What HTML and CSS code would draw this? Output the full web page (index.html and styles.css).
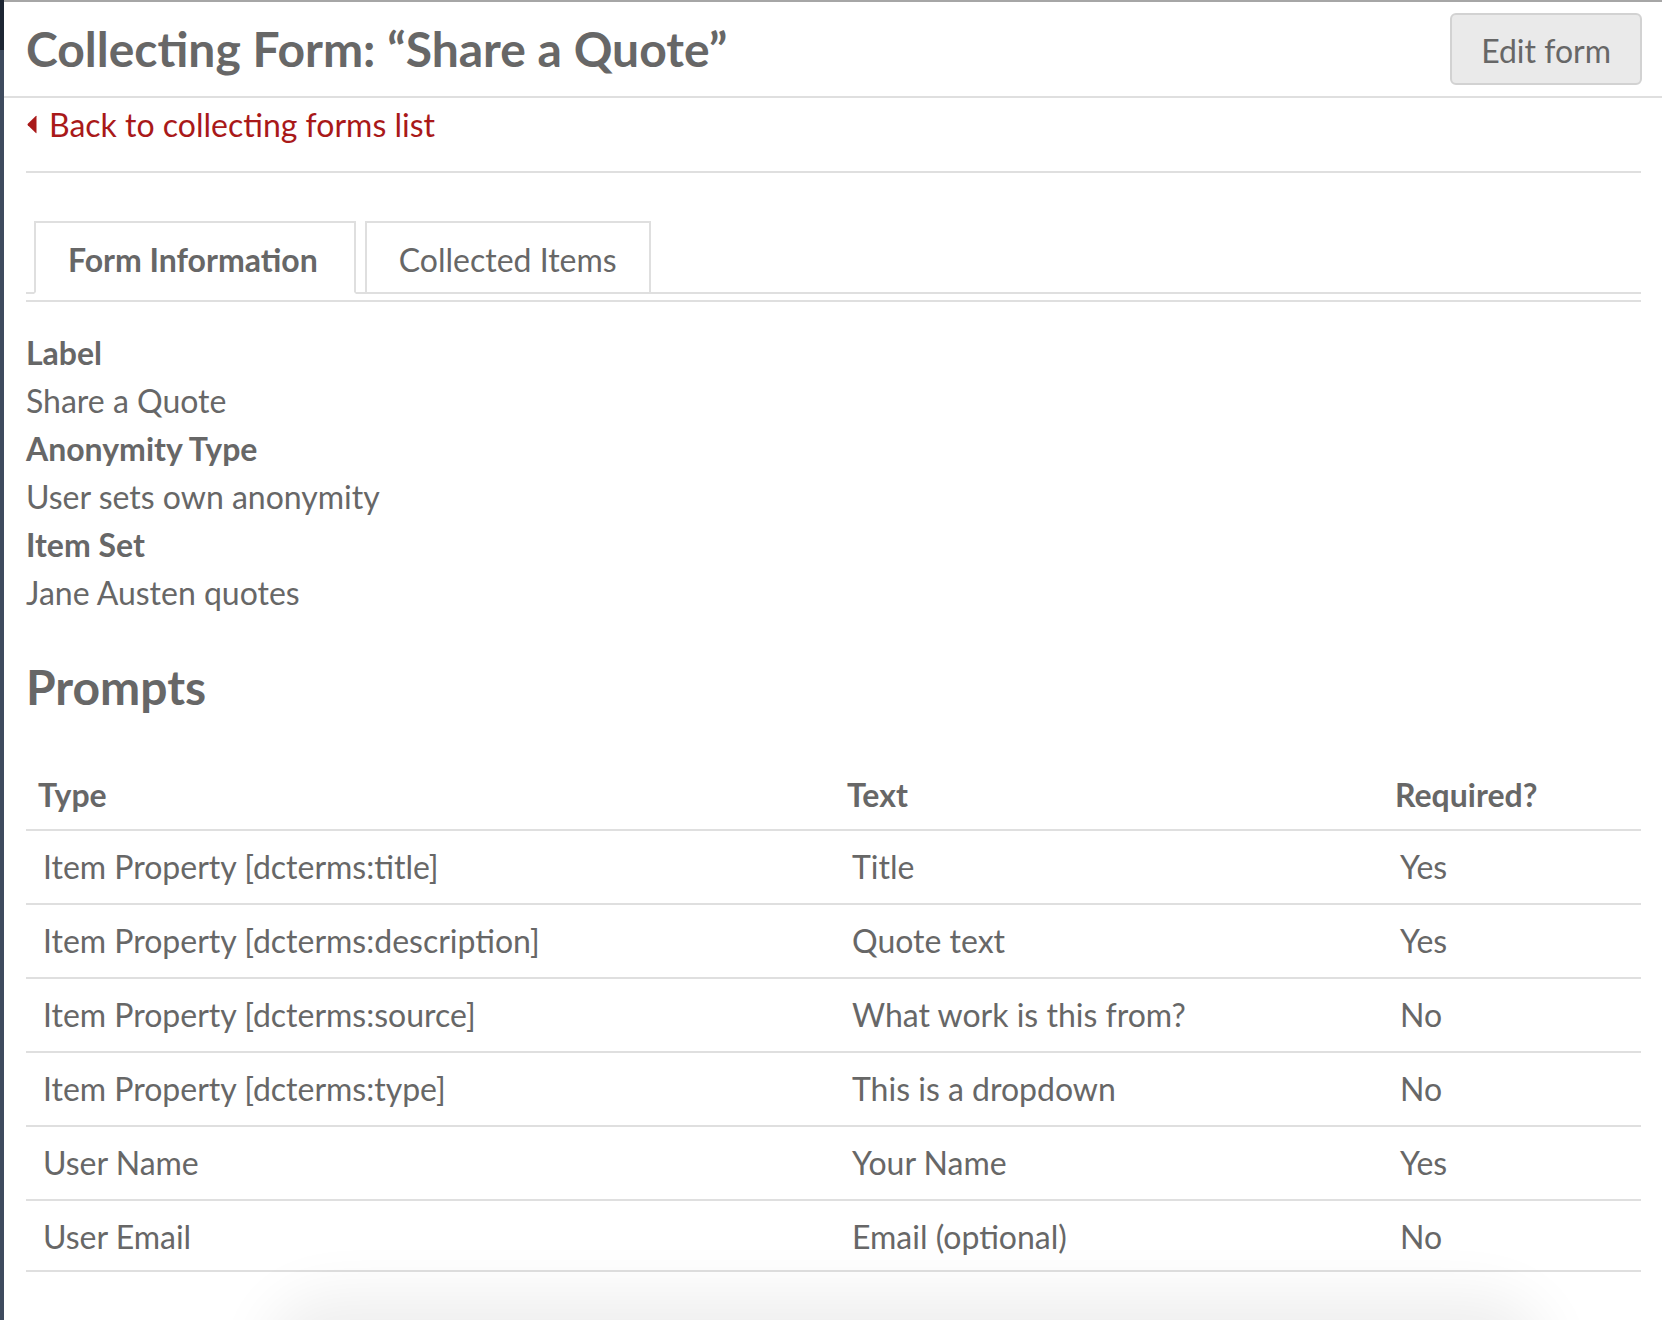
FILE: index.html
```html
<!DOCTYPE html>
<html lang="en">
<head>
<meta charset="utf-8">
<title>Collecting Form: “Share a Quote”</title>
<link rel="stylesheet" href="styles.css">
</head>
<body>
<div class="app">
  <div class="rail"></div>
  <main class="main">
    <header class="page-header">
      <h1 class="page-title">Collecting Form: “Share a Quote”</h1>
      <a class="button" href="#">Edit form</a>
    </header>
    <div class="content">
      <nav class="breadcrumb">
        <a class="back-link" href="#"><svg class="caret" width="10" height="19" viewBox="0 0 10 19"><path d="M9.5 1.2 L9.5 17.8 Q9.5 18.6 8.8 18 L0.8 10.2 Q0.1 9.5 0.8 8.8 L8.8 1 Q9.5 0.4 9.5 1.2 Z" fill="#a91919"/></svg>Back to collecting forms list</a>
      </nav>
      <ul class="tabs">
        <li class="tab active">Form Information</li>
        <li class="tab">Collected Items</li>
      </ul>
      <section class="panel">
        <dl class="props">
          <dt>Label</dt>
          <dd>Share a Quote</dd>
          <dt>Anonymity Type</dt>
          <dd>User sets own anonymity</dd>
          <dt>Item Set</dt>
          <dd>Jane Austen quotes</dd>
        </dl>
        <h2 class="section-title">Prompts</h2>
        <table class="prompts">
          <thead>
            <tr><th class="col-type">Type</th><th class="col-text">Text</th><th class="col-req">Required?</th></tr>
          </thead>
          <tbody>
            <tr><td>Item Property [dcterms:title]</td><td>Title</td><td>Yes</td></tr>
            <tr><td>Item Property [dcterms:description]</td><td>Quote text</td><td>Yes</td></tr>
            <tr><td>Item Property [dcterms:source]</td><td>What work is this from?</td><td>No</td></tr>
            <tr><td>Item Property [dcterms:type]</td><td>This is a dropdown</td><td>No</td></tr>
            <tr><td>User Name</td><td>Your Name</td><td>Yes</td></tr>
            <tr><td>User Email</td><td>Email (optional)</td><td>No</td></tr>
          </tbody>
        </table>
      </section>
    </div>
  </main>
  <div class="footer-shadow"></div>
</div>
</body>
</html>
```
FILE: styles.css
```css
html, body {
  margin: 0;
  padding: 0;
  background: #ffffff;
}
body {
  font-family: "Lato", "Liberation Sans", sans-serif;
  font-size: 32px;
  line-height: 48px;
  color: #676767;
  overflow: hidden;
}
.app {
  display: flex;
  min-height: 1320px;
}
.rail {
  width: 4px;
  flex: none;
  background: linear-gradient(to bottom, #1d2633 0, #1d2633 50px, #3e4b5e 50px, #3e4b5e 100%);
}
.main {
  flex: 1;
  border-top: 2px solid #a6a6a6;
}
.page-header {
  height: 94px;
  display: flex;
  align-items: center;
  justify-content: space-between;
  padding: 0 20px 0 22px;
  border-bottom: 2px solid #dfdfdf;
}
.page-title {
  margin: 0;
  font-size: 48px;
  line-height: 72px;
  font-weight: 700;
  color: #676767;
}
.button {
  display: inline-block;
  box-sizing: border-box;
  height: 72px;
  padding: 12px 29px 8px;
  border: 2px solid #d2d2d2;
  border-radius: 6px;
  background: #eaeaea;
  color: #676767;
  text-decoration: none;
  font-size: 32px;
  line-height: 48px;
}
.content {
  padding: 0 21px 0 22px;
}
.breadcrumb {
  padding: 0 0 22px;
  border-bottom: 2px solid #dfdfdf;
}
.back-link {
  display: inline-flex;
  align-items: center;
  color: #a91919;
  text-decoration: none;
}
.caret {
  margin: 0 12px 0 1px;
}
.tabs {
  list-style: none;
  margin: 48px 0 0;
  padding: 0 0 0 8px;
  display: flex;
  gap: 9px;
  border-bottom: 2px solid #dfdfdf;
}
.tab {
  padding: 13px 32px 8px;
  border: 2px solid #dfdfdf;
  margin-bottom: -2px;
  color: #676767;
}
.tab.active {
  font-weight: 700;
  padding-right: 36px;
  border-bottom-color: #ffffff;
}
.panel {
  margin-top: 6px;
  border-top: 2px solid #dfdfdf;
  padding-top: 27px;
}
.props {
  margin: 0;
}
.props dt {
  font-weight: 700;
}
.props dd {
  margin: 0;
}
.section-title {
  margin: 34px 0 30px;
  font-size: 48px;
  line-height: 72px;
  font-weight: 700;
}
.prompts {
  width: 100%;
  table-layout: fixed;
  border-collapse: separate;
  border-spacing: 0;
}
.prompts th,
.prompts td {
  box-sizing: border-box;
  text-align: left;
  border-bottom: 2px solid #dfdfdf;
  white-space: nowrap;
}
.prompts th {
  padding: 18px 12px 10px;
  font-weight: 700;
}
.prompts td {
  padding: 12px 14px 12px 17px;
}
.prompts tbody tr:last-child td {
  padding-bottom: 9px;
}
.col-type { width: 809px; }
.col-text { width: 548px; }
.col-req { width: auto; }
.footer-shadow {
  position: fixed;
  left: 290px;
  right: 140px;
  bottom: -80px;
  height: 80px;
  border-radius: 40px;
  box-shadow: 0 0 60px 24px rgba(0, 0, 0, 0.07);
}
```
